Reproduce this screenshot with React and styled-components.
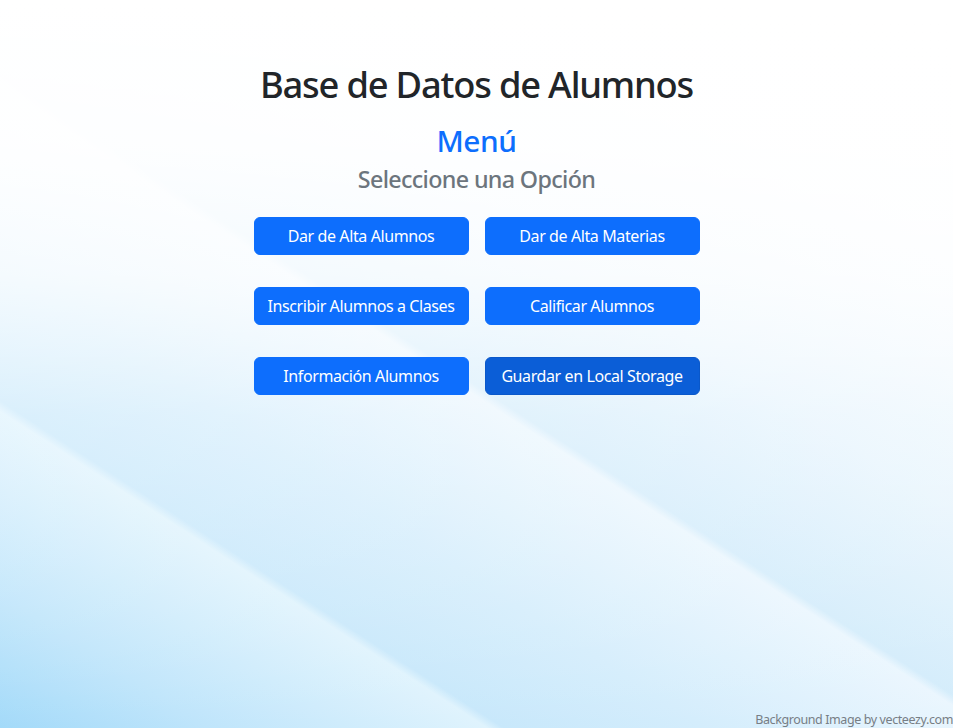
import React from "react";
import styled, { createGlobalStyle } from "styled-components";

const GlobalStyle = createGlobalStyle`
  html, body { margin: 0; padding: 0; }
  body {
    font-family: "Noto Sans", "Open Sans", sans-serif;
    color: #212529;
    letter-spacing: -0.025em;
  }
  * { box-sizing: border-box; }
`;

const Page = styled.div`
  min-height: 100vh;
  display: flex;
  flex-direction: column;
  background:
    linear-gradient(180deg,
      rgba(255,255,255,1) 0%,
      rgba(255,255,255,0.95) 20%,
      rgba(255,255,255,0.75) 38%,
      rgba(255,255,255,0.32) 57%,
      rgba(255,255,255,0) 100%),
    linear-gradient(33deg,
      #a3daf9 0%,
      #bfe5fb 10%,
      #dff3fd 23.5%,
      #c8e8fb 24.3%,
      #d4edfc 34%,
      #eaf6fe 47.6%,
      #d3ecfb 48.4%,
      #e6f4fd 62%,
      #f6fbfe 80%,
      #ffffff 100%);
`;

const Main = styled.main`
  display: flex;
  flex-direction: column;
  align-items: center;
  padding-top: 63px;
`;

const Title = styled.h1`
  margin: 0 0 16px;
  font-size: 36.3px;
  font-weight: 500;
  line-height: 1.2;
  letter-spacing: -0.033em;
  color: #212529;
`;

const MenuTitle = styled.h2`
  margin: 0 0 8px;
  font-size: 29.8px;
  font-weight: 500;
  line-height: 1.2;
  color: #0d6efd;
`;

const Subtitle = styled.h4`
  margin: 0 0 23px;
  font-size: 23.3px;
  font-weight: 500;
  line-height: 1.2;
  letter-spacing: -0.028em;
  color: #6c757d;
`;

const ButtonGrid = styled.div`
  display: grid;
  grid-template-columns: 215px 215px;
  column-gap: 16px;
  row-gap: 32px;
`;

const Button = styled.button`
  height: 38px;
  padding: 6px 12px;
  border: 1px solid ${(p) => (p.$active ? "#0a58ca" : "#0d6efd")};
  border-radius: 6px;
  background: ${(p) => (p.$active ? "#0b5ed7" : "#0d6efd")};
  color: #fff;
  font-family: inherit;
  font-size: 16px;
  letter-spacing: inherit;
  line-height: 1.5;
  white-space: nowrap;
  cursor: pointer;
`;

const Footer = styled.footer`
  margin-top: auto;
  text-align: right;
  font-size: 12.5px;
  line-height: 1;
  color: #777e85;
  padding-bottom: 2px;
`;

const buttons = [
  "Dar de Alta Alumnos",
  "Dar de Alta Materias",
  "Inscribir Alumnos a Clases",
  "Calificar Alumnos",
  "Información Alumnos",
  "Guardar en Local Storage",
];

export default function App() {
  return (
    <>
      <GlobalStyle />
      <Page>
        <Main>
          <Title>Base de Datos de Alumnos</Title>
          <MenuTitle>Menú</MenuTitle>
          <Subtitle>Seleccione una Opción</Subtitle>
          <ButtonGrid>
            {buttons.map((b, i) => (
              <Button key={b} $active={i === buttons.length - 1}>
                {b}
              </Button>
            ))}
          </ButtonGrid>
        </Main>
        <Footer>Background Image by vecteezy.com</Footer>
      </Page>
    </>
  );
}
